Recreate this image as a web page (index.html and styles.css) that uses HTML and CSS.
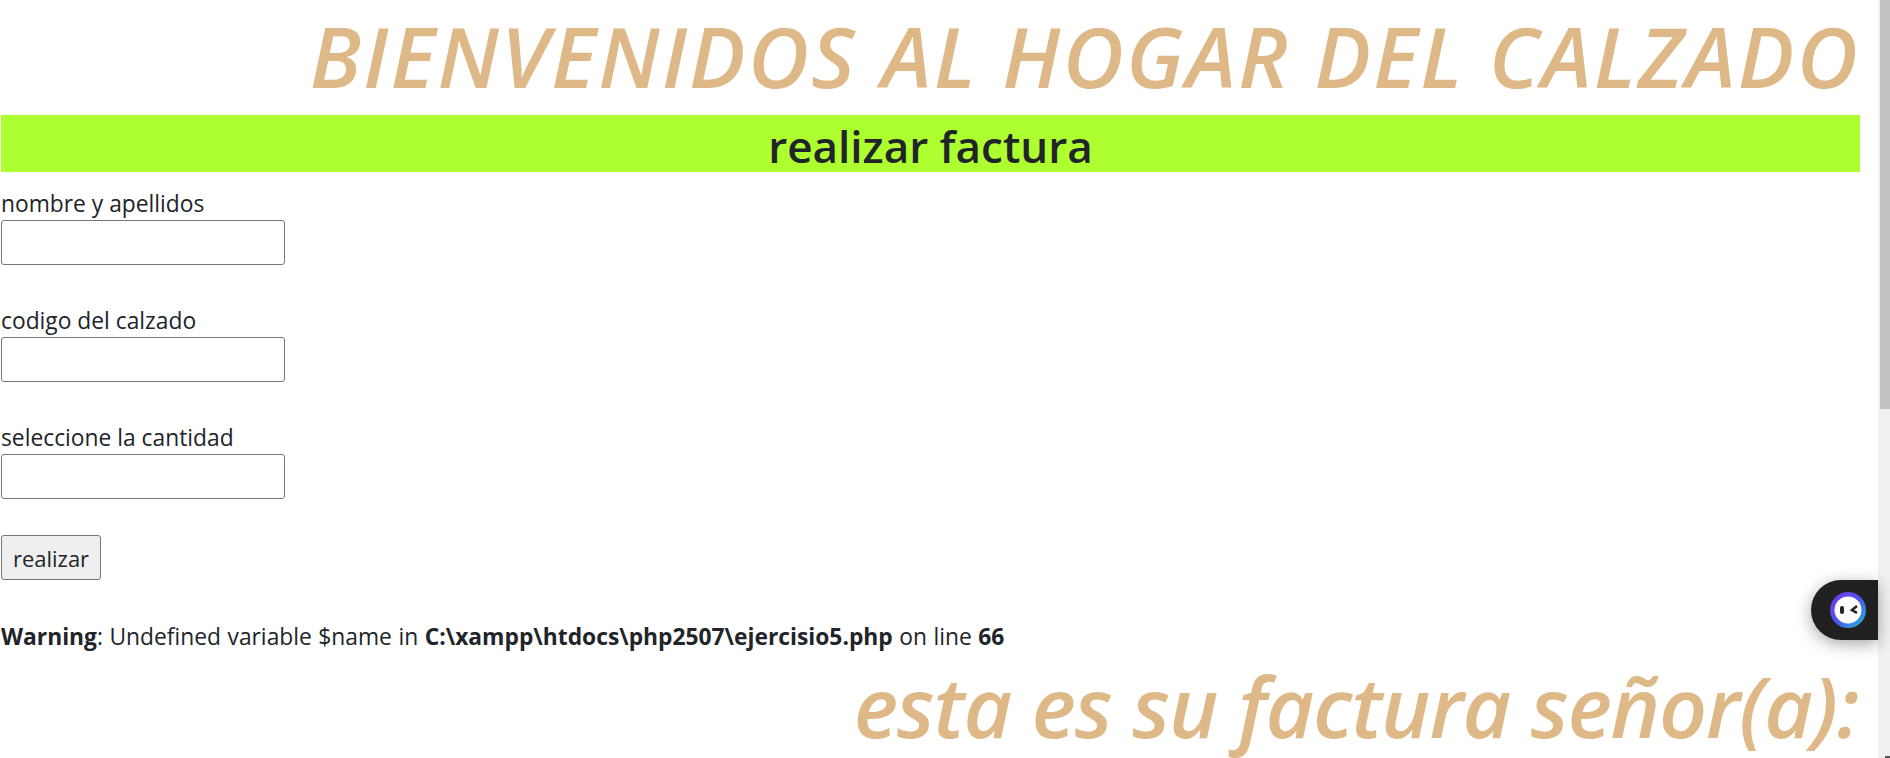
FILE: index.html
```html
<!DOCTYPE html>
<html lang="es">
<head>
<meta charset="utf-8">
<title>Factura</title>
<link rel="stylesheet" href="styles.css">
</head>
<body>
<main class="page">
  <h1 class="title">BIENVENIDOS AL HOGAR DEL CALZADO</h1>
  <h2 class="band">realizar factura</h2>
  <form class="form">
    <div class="field"><label class="label">nombre y apellidos</label><input class="input" type="text"></div>
    <div class="field"><label class="label">codigo del calzado</label><input class="input" type="text"></div>
    <div class="field field-last"><label class="label">seleccione la cantidad</label><input class="input" type="text"></div>
    <button class="submit" type="button">realizar</button>
  </form>
  <p class="warning"><b>Warning</b>: Undefined variable $name in <b>C:\xampp\htdocs\php2507\ejercisio5.php</b> on line <b>66</b></p>
  <h1 class="title title-bottom">esta es su factura señor(a):</h1>
</main>
<div class="scrollbar"><div class="thumb"></div><div class="arrow"></div></div>
<div class="widget">
  <svg class="bot" width="36" height="36" viewBox="0 0 36 36">
    <defs><linearGradient id="g" x1="0" y1="0" x2="1" y2="1"><stop offset="0" stop-color="#7a35e8"/><stop offset="0.5" stop-color="#4a55ee"/><stop offset="1" stop-color="#22c0d0"/></linearGradient></defs>
    <circle cx="18" cy="18" r="18" fill="url(#g)"/>
    <circle cx="18" cy="18" r="13.5" fill="#fff"/>
    <rect x="10" y="14" width="4" height="8" rx="2" fill="#222"/>
    <path d="M27 14 L22 18 L27 21" fill="none" stroke="#222" stroke-width="2.6"/>
  </svg>
</div>
</body>
</html>
```

FILE: styles.css
```css
html, body {
  margin: 0;
  height: 100%;
  overflow: hidden;
  background: #fff;
}
body {
  font-family: "Open Sans", "Noto Sans", sans-serif;
  font-size: 22.8px;
  color: #212529;
}
.page {
  width: 1859px;
  padding-left: 1px;
}
.title {
  margin: 0;
  height: 115px;
  text-align: right;
  font-size: 84px;
  line-height: 112px;
  font-weight: 600;
  font-style: italic;
  letter-spacing: 2.4px;
  color: #deb887;
  white-space: nowrap;
}
.band {
  margin: 0;
  height: 57px;
  background: #adff2f;
  text-align: center;
  font-size: 44px;
  line-height: 62px;
  font-weight: 600;
}
.form {
  display: flex;
  flex-direction: column;
  align-items: flex-start;
  padding-top: 17px;
}
.field {
  display: flex;
  flex-direction: column;
  align-items: flex-start;
  height: 117px;
}
.field-last {
  height: 112px;
}
.label {
  height: 31px;
  line-height: 29px;
}
.input {
  box-sizing: border-box;
  width: 284px;
  height: 45px;
  margin: 0;
  background: #fff;
  border: 1px solid #767676;
  border-radius: 3px;
}
.submit {
  box-sizing: border-box;
  width: 100px;
  height: 45px;
  margin: 0;
  padding: 0;
  font: inherit;
  font-size: 22px;
  color: #212529;
  background: #efefef;
  border: 1px solid #767676;
  border-radius: 3px;
}
.warning {
  margin: 0;
  padding-top: 41px;
  height: 31px;
  word-spacing: 0.6px;
  line-height: 31px;
  white-space: nowrap;
}
.title-bottom {
  letter-spacing: -1.2px;
  line-height: 108px;
  padding-right: 2px;
}
.scrollbar {
  position: fixed;
  top: 0;
  right: 0;
  width: 12px;
  height: 100%;
  background: #f1f1f1;
}
.thumb {
  margin-left: 2px;
  height: 409px;
  background: #c1c1c1;
}
.arrow {
  position: absolute;
  right: 0;
  bottom: 0;
  width: 5px;
  height: 2px;
  background: #555;
}
.widget {
  position: fixed;
  left: 1811px;
  top: 580px;
  width: 67px;
  height: 60px;
  display: flex;
  align-items: center;
  padding-left: 19px;
  box-sizing: border-box;
  background: #202020;
  border-radius: 30px 0 0 30px;
  box-shadow: 0 4px 16px rgba(0,0,0,.35);
}
```
